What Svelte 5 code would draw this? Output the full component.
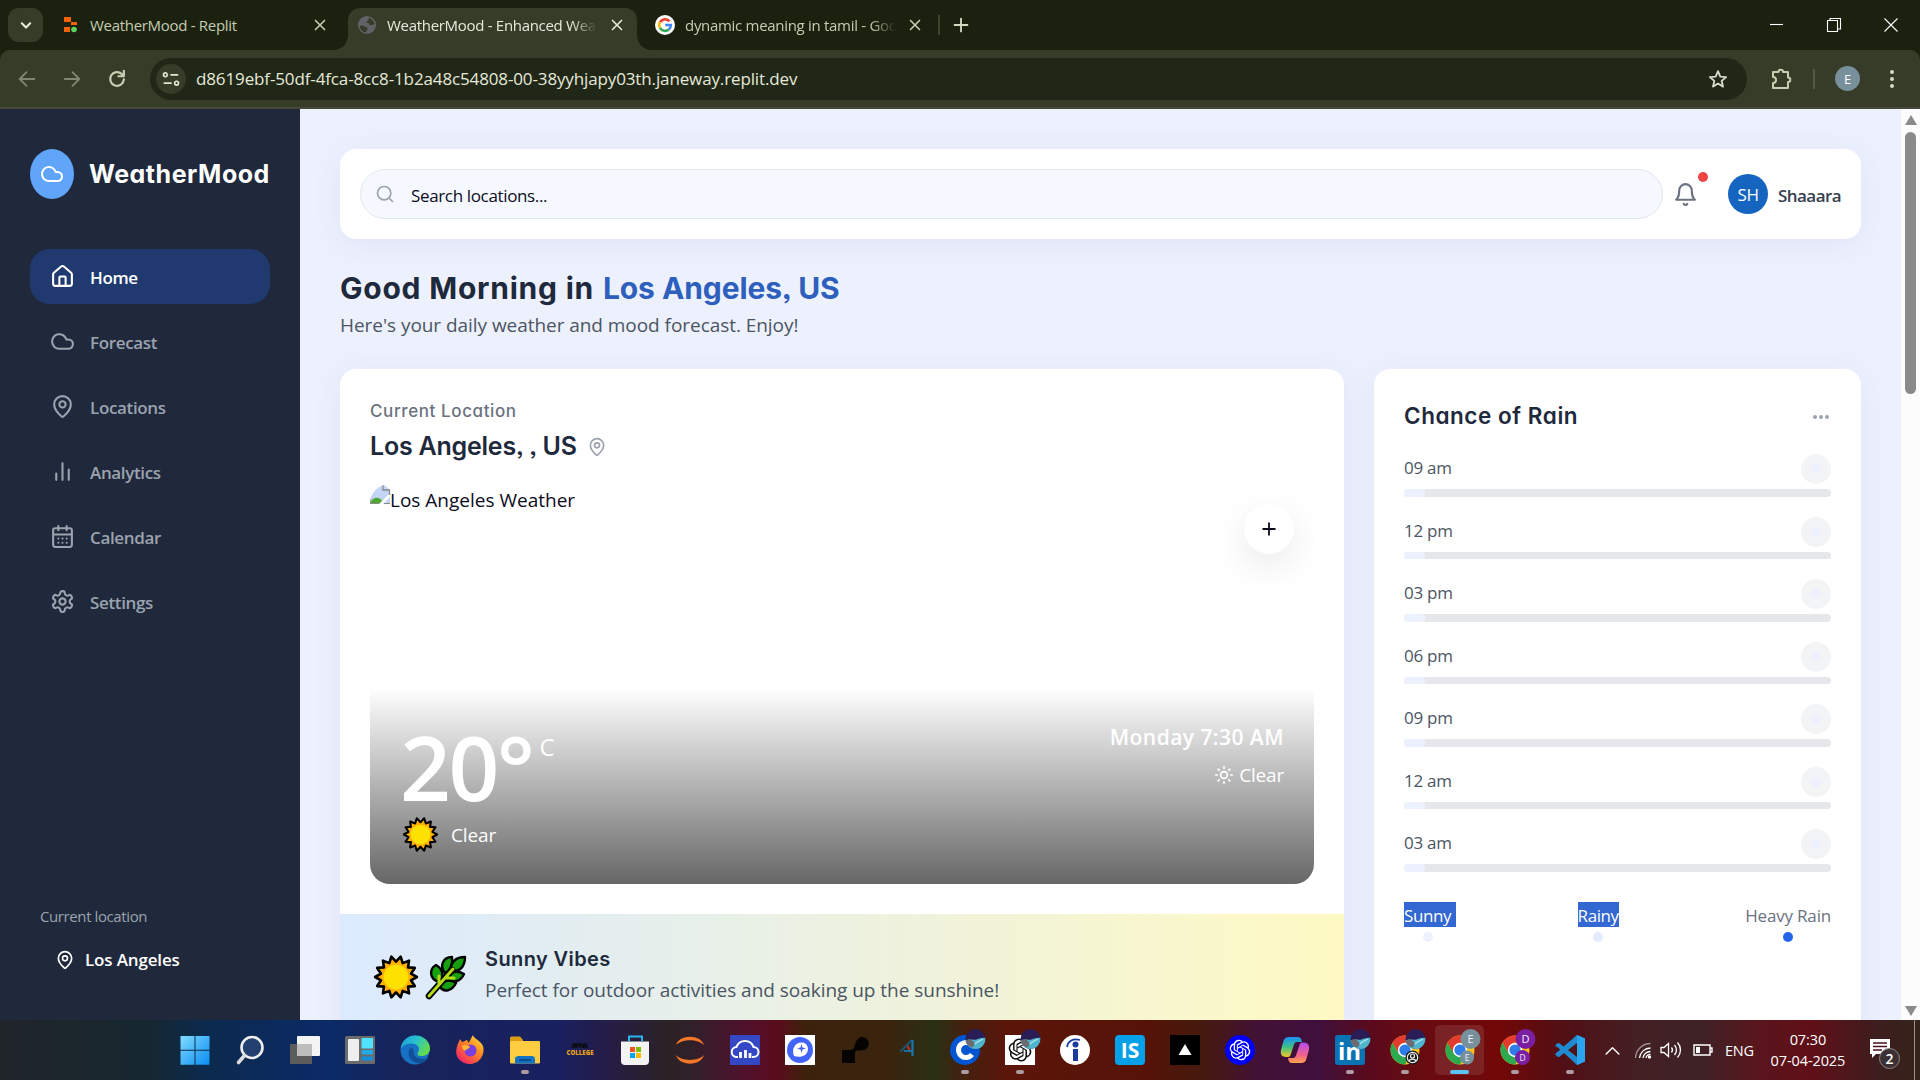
<script>
  const I = {
    cloud: 'M17.5 19H9a7 7 0 1 1 6.71-9h1.79a4.5 4.5 0 1 1 0 9Z',
    home: 'M15 21v-8a1 1 0 0 0-1-1h-4a1 1 0 0 0-1 1v8M3 10a2 2 0 0 1 .709-1.528l7-5.999a2 2 0 0 1 2.582 0l7 5.999A2 2 0 0 1 21 10v9a2 2 0 0 1-2 2H5a2 2 0 0 1-2-2z',
    pin: 'M20 10c0 4.993-5.539 10.193-7.399 11.799a1 1 0 0 1-1.202 0C9.539 20.193 4 14.993 4 10a8 8 0 0 1 16 0M9 10a3 3 0 1 0 6 0a3 3 0 1 0-6 0',
    chart: 'M18 20V10M12 20V4M6 20v-6',
    calendar: 'M8 2v4M16 2v4M5 4h14a2 2 0 0 1 2 2v14a2 2 0 0 1-2 2H5a2 2 0 0 1-2-2V6a2 2 0 0 1 2-2M3 10h18M8 14h.01M12 14h.01M16 14h.01M8 18h.01M12 18h.01M16 18h.01',
    gear: 'M12.22 2h-.44a2 2 0 0 0-2 2v.18a2 2 0 0 1-1 1.73l-.43.25a2 2 0 0 1-2 0l-.15-.08a2 2 0 0 0-2.73.73l-.22.38a2 2 0 0 0 .73 2.73l.15.1a2 2 0 0 1 1 1.72v.51a2 2 0 0 1-1 1.74l-.15.09a2 2 0 0 0-.73 2.73l.22.38a2 2 0 0 0 2.73.73l.15-.08a2 2 0 0 1 2 0l.43.25a2 2 0 0 1 1 1.73V20a2 2 0 0 0 2 2h.44a2 2 0 0 0 2-2v-.18a2 2 0 0 1 1-1.73l.43-.25a2 2 0 0 1 2 0l.15.08a2 2 0 0 0 2.73-.73l.22-.39a2 2 0 0 0-.73-2.73l-.15-.08a2 2 0 0 1-1-1.74v-.5a2 2 0 0 1 1-1.74l.15-.09a2 2 0 0 0 .73-2.73l-.22-.38a2 2 0 0 0-2.73-.73l-.15.08a2 2 0 0 1-2 0l-.43-.25a2 2 0 0 1-1-1.73V4a2 2 0 0 0-2-2zM9 12a3 3 0 1 0 6 0a3 3 0 1 0-6 0',
    search: 'M3 11a8 8 0 1 0 16 0a8 8 0 1 0-16 0M21 21l-4.3-4.3',
    bell: 'M6 8a6 6 0 0 1 12 0c0 7 3 9 3 9H3s3-2 3-9M10.3 21a1.94 1.94 0 0 0 3.4 0',
    sun: 'M8 12a4 4 0 1 0 8 0a4 4 0 1 0-8 0M12 2v2M12 20v2M4.93 4.93l1.41 1.41M17.66 17.66l1.41 1.41M2 12h2M20 12h2M6.34 17.66l-1.41 1.41M19.07 4.93l-1.41 1.41',
    plus: 'M5 12h14M12 5v14',
    close: 'M6 6l12 12M18 6L6 18',
    back: 'M20 12H4.500M11.500 4.500L4 12l7.500 7.500',
    forward: 'M4 12h15.500M12.500 4.500L20 12l-7.500 7.500',
    reload: 'M19.500 12.500a7.500 7.500 0 1 1-2.300-6L19.500 9M19.500 3v6h-6',
    star: 'M12 3.500l2.500 5.900 6.400.5-4.900 4.200 1.500 6.200-5.500-3.300-5.500 3.300 1.500-6.200-4.900-4.200 6.400-.5z',
    chevronDown: 'M7 10l5 5 5-5',
    chevronUp: 'M3 17l9-9 9 9',
    puzzle: 'M4 5h5.500a2.300 2.300 0 0 1 4.600 0H19v5.500a2.300 2.300 0 0 1 0 4.600V21H4v-5a3 3 0 0 0 0-6z',
    tune: 'M3 7a2.300 2.300 0 1 0 4.600 0a2.300 2.300 0 1 0-4.600 0M12 7h8M4 17h8M16.400 17a2.300 2.300 0 1 0 4.600 0a2.300 2.300 0 1 0-4.600 0'
  };

  const nav = [
    { label: 'Home', icon: 'home', active: true },
    { label: 'Forecast', icon: 'cloud' },
    { label: 'Locations', icon: 'pin' },
    { label: 'Analytics', icon: 'chart' },
    { label: 'Calendar', icon: 'calendar' },
    { label: 'Settings', icon: 'gear' }
  ];

  const hours = ['09 am', '12 pm', '03 pm', '06 pm', '09 pm', '12 am', '03 am'].map((time) => ({ time, chance: 5 }));

  // Fourteen-spike outline for the sun emoji.
  const spikes = Array.from({ length: 28 }, (_, i) => {
    const r = i % 2 ? 15.2 : 11.2;
    const a = (i * Math.PI) / 14;
    return `${(16 + r * Math.sin(a)).toFixed(2)},${(16 - r * Math.cos(a)).toFixed(2)}`;
  }).join(' ');

  const apps = [
    'windows', 'find', 'taskview', 'widgets', 'edge', 'firefox', 'files', 'apna', 'store', 'jupyter', 'cloudwatch',
    'drop', 'blob', 'four', 'coursera', 'gpt', 'info', 'is', 'vercel', 'gptblue', 'copilot',
    'linkedin', 'chromeA', 'chromeE', 'chromeD', 'vscode'
  ];
  const running = ['files', 'coursera', 'gpt', 'linkedin', 'chromeA', 'chromeD', 'vscode'];
</script>

{#snippet icon(name, size, weight = 2)}
  <svg width={size} height={size} viewBox="0 0 24 24" fill="none" stroke="currentColor" stroke-width={weight} stroke-linecap="round" stroke-linejoin="round"><path d={I[name]} /></svg>
{/snippet}

{#snippet sunEmoji(size)}
  <svg width={size} height={size} viewBox="0 0 32 32">
    <polygon points={spikes} fill="#ffb000" stroke="#000" stroke-width="1.9" stroke-linejoin="round" />
    <circle cx="16" cy="16" r="9" fill="#ffe100" />
  </svg>
{/snippet}

{#snippet knot(scale)}
  <path transform="translate(15 15) scale({scale}) translate(-12 -12)" fill="currentColor" d="M22.2819 9.8211a5.9847 5.9847 0 0 0-.5157-4.9108 6.0462 6.0462 0 0 0-6.5098-2.9A6.0651 6.0651 0 0 0 4.9807 4.1818a5.9847 5.9847 0 0 0-3.9977 2.9 6.0462 6.0462 0 0 0 .7427 7.0966 5.98 5.98 0 0 0 .511 4.9107 6.051 6.051 0 0 0 6.5146 2.9001A5.9847 5.9847 0 0 0 13.2599 24a6.0557 6.0557 0 0 0 5.7718-4.2058 5.9894 5.9894 0 0 0 3.9977-2.9001 6.0557 6.0557 0 0 0-.7475-7.0729zm-9.022 12.6081a4.4755 4.4755 0 0 1-2.8764-1.0408l.1419-.0804 4.7783-2.7582a.7948.7948 0 0 0 .3927-.6813v-6.7369l2.02 1.1686a.071.071 0 0 1 .038.052v5.5826a4.504 4.504 0 0 1-4.4945 4.4944zm-9.6607-4.1254a4.4708 4.4708 0 0 1-.5346-3.0137l.142.0852 4.783 2.7582a.7712.7712 0 0 0 .7806 0l5.8428-3.3685v2.3324a.0804.0804 0 0 1-.0332.0615L9.74 19.9502a4.4992 4.4992 0 0 1-6.1408-1.6464zM2.3408 7.8956a4.485 4.485 0 0 1 2.3655-1.9728V11.6a.7664.7664 0 0 0 .3879.6765l5.8144 3.3543-2.0201 1.1685a.0757.0757 0 0 1-.071 0l-4.8303-2.7865A4.504 4.504 0 0 1 2.3408 7.872zm16.5963 3.8558L13.1038 8.364 15.1192 7.2a.0757.0757 0 0 1 .071 0l4.8303 2.7913a4.4944 4.4944 0 0 1-.6765 8.1042v-5.6772a.79.79 0 0 0-.407-.667zm2.0107-3.0231l-.142-.0852-4.7735-2.7818a.7759.7759 0 0 0-.7854 0L9.409 9.2297V6.8974a.0662.0662 0 0 1 .0284-.0615l4.8303-2.7866a4.4992 4.4992 0 0 1 6.6802 4.66zM8.3065 12.863l-2.02-1.1638a.0804.0804 0 0 1-.038-.0567V6.0742a4.4992 4.4992 0 0 1 7.3757-3.4537l-.142.0805L8.704 5.459a.7948.7948 0 0 0-.3927.6813zm1.0976-2.3654l2.602-1.4998 2.6069 1.4998v2.9994l-2.5974 1.4997-2.6067-1.4997Z" />
{/snippet}

{#snippet chrome()}
  <circle cx="15" cy="15" r="14.500" fill="#fbc116" />
  <path d="M2.400 7.800A14.500 14.500 0 0 1 27.600 7.800H15L8.700 18.700z" fill="#e33b2e" />
  <path d="M2.400 7.800A14.500 14.500 0 0 0 15 29.500L21.300 18.600H8.700z" fill="#2da94f" />
  <circle cx="15" cy="15" r="7.200" fill="#fff" />
  <circle cx="15" cy="15" r="5.600" fill="#2f7de9" />
{/snippet}

{#snippet globe()}
  <circle cx="25.500" cy="4" r="10" fill="#2a1d55" />
  <path d="M15.600 5.500c4-2 7 0 11-1 3-1 6-2 8.800-1.500a10 10 0 0 1-9.400 11c-5 .3-9.500-3.200-10.400-8.500z" fill="#4fb4cc" />
  <path d="M15.600 5.500l5-1.500 4 4-1.500 4.500c-4-.5-7-3.500-7.500-7z" fill="#6d6a70" />
  <path d="M25 9c2-3 5-3 8-5" fill="none" stroke="#a5e4ee" stroke-width="1.500" />
{/snippet}

{#snippet app(name)}
  <svg class="app" width="30" height="30" viewBox="0 0 30 30">
    {#if name === 'windows'}
      <defs><linearGradient id="win" x1="0" y1="0" x2="1" y2="1"><stop offset="0" stop-color="#7fdcff" /><stop offset="1" stop-color="#0a8bf2" /></linearGradient></defs>
      <path d="M.5 1h14v13.700H.5zM15.500 1h14v13.700h-14zM.5 15.800h14v14H.5zM15.500 15.800h14v14h-14z" fill="url(#win)" />
    {:else if name === 'find'}
      <circle cx="17" cy="12.500" r="10.500" fill="#24406f" stroke="#eee" stroke-width="2.600" />
      <path d="M9.500 20.500L3.500 27.500" stroke="#ddd" stroke-width="3.600" stroke-linecap="round" />
    {:else if name === 'taskview'}
      <rect x="0" y="9" width="22" height="20" rx="1" fill="#5c5c5c" /><rect x="7" y="1" width="23" height="20" rx="1" fill="#f4f4f4" /><rect x="7" y="9" width="15" height="12" fill="#bdbdbd" />
    {:else if name === 'widgets'}
      <rect y="1" width="30" height="28" rx="1.500" fill="#6b6b6b" /><rect x="3" y="4" width="11" height="22" rx="1" fill="#eee" /><rect x="16.500" y="3" width="11.500" height="10.500" rx="1" fill="#4fe3ff" /><rect x="16.500" y="15" width="11.500" height="4.500" rx="1" fill="#22a9e8" /><rect x="16.500" y="21.500" width="11.500" height="4" rx="1" fill="#1590dd" />
    {:else if name === 'edge'}
      <defs><linearGradient id="edge" x1="0" y1="0" x2="1" y2=".5"><stop offset="0" stop-color="#1c9ae0" /><stop offset=".55" stop-color="#29c3c9" /><stop offset="1" stop-color="#62dc4c" /></linearGradient></defs>
      <circle cx="15" cy="15" r="14.500" fill="#1672c4" />
      <path d="M.6 14C2 5 8 .5 15.500.5 24 .5 30 7 30 13.500c0 5-4 7.500-8.500 7.500-3.500 0-5-1.800-3.500-3.800 3-4.200-.6-8.700-6.500-8.700C6.500 8.500 2.500 10.500.6 14z" fill="url(#edge)" />
      <path d="M11 12c-5 5-2.500 15.500 8.500 16.500 4 0 7-3 9-6-5 2.500-16 2-15-8z" fill="#124f96" />
    {:else if name === 'firefox'}
      <defs><linearGradient id="fox" x1="1" y1="0" x2=".2" y2="1"><stop offset="0" stop-color="#fff04a" /><stop offset=".45" stop-color="#ff8a1f" /><stop offset="1" stop-color="#f5206b" /></linearGradient></defs>
      <path d="M18 0c1 4 7 5 10 11 2.500 9-4 18-13 18S-.5 22 1.500 14c.5-4 2-6 3.500-10 1 2 2 3 3 3 2-1 3-2 4-2 1 1 1 2 1.500 3C15 6 16 3 18 0z" fill="url(#fox)" />
      <circle cx="15.500" cy="15.500" r="6" fill="#7a3fe0" /><path d="M7 11c3-2 7-1 8 1-1 2-4 2-5 4-1-1-3-2-3-5z" fill="#ffb52e" />
    {:else if name === 'files'}
      <path d="M0 3.500C0 2 1 1.500 2 1.500h8l3 3.500v5H0z" fill="#dd9b10" /><rect y="6" width="30" height="22.500" rx="1.200" fill="#fdcc40" /><path d="M5 28.500v-4a3.500 3.500 0 0 1 3.500-3.500h13a3.500 3.500 0 0 1 3.500 3.500v4z" fill="#1372c2" /><rect x="9" y="24" width="12" height="2" rx="1" fill="#0b4c8d" />
    {:else if name === 'apna'}
      <text x="15" y="13" text-anchor="middle" font-size="7.500" font-weight="800" fill="#0b0b12" textLength="17">APNA</text><text x="15" y="19.500" text-anchor="middle" font-size="7.500" font-weight="800" fill="#e8a21c" textLength="27" lengthAdjust="spacingAndGlyphs">COLLEGE</text>
    {:else if name === 'store'}
      <path d="M9 6V1.500h13V6" fill="none" stroke="#29b6ee" stroke-width="2" /><path d="M1 6.500h28V26a4 4 0 0 1-4 4H5a4 4 0 0 1-4-4z" fill="#f3f3f3" /><path d="M10 12h5v5h-5z" fill="#f25022" /><path d="M16 12h5v5h-5z" fill="#7fba00" /><path d="M10 18h5v5h-5z" fill="#00a4ef" /><path d="M16 18h5v5h-5z" fill="#ffb900" />
    {:else if name === 'jupyter'}
      <path d="M1 10C4-1 26-1 29 10 23 3.500 7 3.500 1 10zM1 20c3 11.500 25 11.500 28 0-6 6.500-22 6.500-28 0z" fill="#f37726" />
    {:else if name === 'cloudwatch'}
      <rect width="30" height="30" fill="#3448c5" /><path d="M8 22H7a5 5 0 0 1-.500-10A9 9 0 0 1 23.500 12a5 5 0 0 1 0 10H22" fill="none" stroke="#fff" stroke-width="2" /><path d="M10.500 17v6M15.500 15v8M20 18v5" stroke="#fff" stroke-width="2.800" />
    {:else if name === 'drop'}
      <rect width="30" height="30" fill="#fff" /><circle cx="15" cy="15" r="13" fill="#4264fb" /><path d="M9 21c-3-8 2-14 8-13.500 5 .5 7 5 5.500 9C21 21 15 23 9 21z" fill="#fff" /><path d="M16.500 9l1 3.500 3.500 1-3.500 1-1 3.500-1-3.500-3.500-1 3.500-1z" fill="#4264fb" />
    {:else if name === 'blob'}
      <path d="M2 15h8c5 0 4-4 6-8a6.500 6.500 0 1 1 7 8c-4 2-8-2-8 4v9H2z" fill="#060402" />
    {:else if name === 'four'}
      <path d="M5.500 16.500L17 5" fill="none" stroke="#1d5578" stroke-width="2" /><path d="M17.500 5v16" stroke="#1478b2" stroke-width="2.200" /><path d="M12.500 11l3 6" stroke="#c03038" stroke-width="2" /><path d="M9 16h8" stroke="#1478b2" stroke-width="1.800" />
    {:else if name === 'coursera'}
      <circle cx="15" cy="15" r="15" fill="#0056d2" /><path d="M22 19.500a7.500 7.500 0 1 1 0-9" fill="none" stroke="#fff" stroke-width="5" />{@render globe()}
    {:else if name === 'gpt'}
      <rect width="30" height="30" fill="#fff" /><g color="#111">{@render knot(0.95)}</g>{@render globe()}
    {:else if name === 'info'}
      <circle cx="15" cy="15" r="15" fill="#fff" /><circle cx="15.500" cy="9.500" r="3" fill="#1b3c9c" /><path d="M13 14h5v12h-5z" fill="#1b3c9c" /><path d="M7 12c1-6 6-9 13-7" fill="none" stroke="#1b3c9c" stroke-width="1.800" />
    {:else if name === 'is'}
      <rect width="30" height="30" rx="4" fill="#06a0e8" /><text x="15" y="22.500" text-anchor="middle" font-size="21" font-weight="700" fill="#fff">IS</text>
    {:else if name === 'vercel'}
      <rect width="30" height="30" fill="#000" /><path d="M15 9l6.500 11h-13z" fill="#fff" />
    {:else if name === 'gptblue'}
      <circle cx="15" cy="15" r="15" fill="#0000fa" /><g color="#fff">{@render knot(0.86)}</g>
    {:else if name === 'copilot'}
      <defs><linearGradient id="cpa" x1="0" y1="0" x2="0" y2="1"><stop offset="0" stop-color="#1a8ef5" /><stop offset=".5" stop-color="#3cc184" /><stop offset="1" stop-color="#f5c82a" /></linearGradient><linearGradient id="cpb" x1="0" y1="0" x2="0" y2="1"><stop offset="0" stop-color="#b44df0" /><stop offset=".6" stop-color="#f2608e" /><stop offset="1" stop-color="#ffa54a" /></linearGradient></defs>
      <path d="M9 2h9c3 0 3.500 3 4 5h-5c-2 0-3 2-3.500 4l-3 9c-.5 2-2 2-4 2-6 0-6.500-4-5-9l2-7c.8-2.500 2.500-4 5.500-4z" fill="url(#cpa)" />
      <path d="M21 28h-9c-2.500 0-3.500-2-4-5h5c2 0 3-2 3.500-4l3-9c.5-2 2-2.500 4-2.500 5.500 0 6.500 4 5 9l-2 7c-.8 3-2.500 4.500-5.500 4.500z" fill="url(#cpb)" />
    {:else if name === 'linkedin'}
      <rect width="30" height="30" rx="3" fill="#0a73b4" /><text x="14.500" y="25" text-anchor="middle" font-size="24" font-weight="700" fill="#fff">in</text>{@render globe()}
    {:else if name === 'chromeA'}
      {@render chrome()}{@render globe()}<circle cx="22.500" cy="22.500" r="7" fill="#181818" /><circle cx="22.500" cy="22.500" r="5.200" fill="none" stroke="#eee" stroke-width="1.200" /><circle cx="22.500" cy="21" r="2" fill="none" stroke="#eee" stroke-width="1.200" /><path d="M19 26c1-2.500 6-2.500 7 0" fill="none" stroke="#eee" stroke-width="1.200" />
    {:else if name === 'chromeE'}
      {@render chrome()}<circle cx="25.500" cy="4" r="10" fill="#78909c" /><text x="25.500" y="8" text-anchor="middle" font-size="11" fill="#eef">E</text><circle cx="22" cy="22.500" r="7" fill="#78909c" /><text x="22" y="25.500" text-anchor="middle" font-size="8.500" fill="#eef">E</text>
    {:else if name === 'chromeD'}
      {@render chrome()}<circle cx="25.500" cy="4" r="10" fill="#7b1fa2" /><text x="25.500" y="8" text-anchor="middle" font-size="11" fill="#eef">D</text><circle cx="22.500" cy="22.500" r="7.500" fill="#7b1fa2" /><text x="22.500" y="25.500" text-anchor="middle" font-size="8.500" fill="#eef">D</text>
    {:else if name === 'vscode'}
      <path d="M22 0l8 3.500v23L22 30 3 12.500 0 11l2-2.500 2-.500L22 22V8L4 22l-2-.500-2-2.500L22 0z" fill="#1f8ad2" /><path d="M22 0l8 3.500v23L22 30z" fill="#2aa4ee" />
    {/if}
  </svg>
{/snippet}

<div class="screen">
  <div class="tabs">
    <div class="menu">{@render icon('chevronDown', 20, 2.6)}</div>
    <div class="tab first">
      <svg width="14" height="18" viewBox="0 0 14 18"><path d="M0 1h7v5H0zM7 6h6v3H7zM0 11h6v5H0z" fill="#f26207" /><circle cx="10" cy="13.500" r="2.800" fill="#5fd35f" /></svg>
      <span class="ttl">WeatherMood - Replit</span>
      <span class="x">{@render icon('close', 18, 2.2)}</span>
    </div>
    <div class="tab active">
      <svg width="18" height="18" viewBox="0 0 18 18"><circle cx="9" cy="9" r="9" fill="#5f6368" /><path d="M1.500 9.500l4 .3c1 .2 1.200 1 2.200 1.200l2 .8c.3 1.500-1.200 2.200-1.500 4.700C4.500 16.200 1.800 13.200 1.500 9.500zM10.500 1.700c3 .6 5.300 3 5.900 6.300l-2.400 1.200-2.500-.4-.8-1.600-2.200-.6.2-1.600 1.800-.6z" fill="#363c28" /></svg>
      <span class="ttl fade">WeatherMood - Enhanced Weather</span>
      <span class="x">{@render icon('close', 18, 2.2)}</span>
    </div>
    <div class="tab third">
      <svg width="20" height="20" viewBox="0 0 20 20"><circle cx="10" cy="10" r="10" fill="#fff" /><g fill="none" stroke-width="2.600"><path d="M14.500 6.300A5.900 5.900 0 0 0 5 7.200" stroke="#ea4335" /><path d="M5 7.200a5.900 5.900 0 0 0 0 5.700" stroke="#fbbc05" /><path d="M5 12.900a5.900 5.900 0 0 0 8.800 1.600" stroke="#34a853" /><path d="M13.800 14.500a5.900 5.900 0 0 0 2-4.500H10.200" stroke="#4285f4" /></g></svg>
      <span class="ttl fade">dynamic meaning in tamil - Google</span>
      <span class="x">{@render icon('close', 18, 2.2)}</span>
    </div>
    <i class="tabsep"></i>
    <span class="newtab">{@render icon('plus', 22, 2)}</span>
    <div class="winctl">
      <svg width="14" height="14" viewBox="0 0 14 14"><path d="M0 6.500h13" /></svg>
      <svg width="14" height="14" viewBox="0 0 14 14"><path d="M.5 2.500h10v11H.5zM3 2.500v-2h10.500v10.500h-3" /></svg>
      <svg width="14" height="14" viewBox="0 0 14 14"><path d="M.5.5l13 13M13.500.5l-13 13" /></svg>
    </div>
  </div>

  <div class="toolbar">
    <span class="tb dim">{@render icon('back', 22, 2)}</span>
    <span class="tb dim">{@render icon('forward', 22, 2)}</span>
    <span class="tb">{@render icon('reload', 22, 2.4)}</span>
    <div class="url">
      <span class="site">{@render icon('tune', 20, 2)}</span>
      <span class="addr">d8619ebf-50df-4fca-8cc8-1b2a48c54808-00-38yyhjapy03th.janeway.replit.dev</span>
      <span class="bookmark">{@render icon('star', 22, 2)}</span>
    </div>
    <span class="ext">{@render icon('puzzle', 24, 2)}</span>
    <i class="toolsep"></i>
    <span class="profile">E</span>
    <span class="dots"><i></i><i></i><i></i></span>
  </div>

  <div class="page">
    <aside>
      <div class="brand"><span class="logo">{@render icon('cloud', 24, 2)}</span><span class="name">WeatherMood</span></div>
      <nav>
        {#each nav as item}
          <div class="item" class:on={item.active}>{@render icon(item.icon, 25)}<span>{item.label}</span></div>
        {/each}
      </nav>
      <div class="here">
        <div class="cap">Current location</div>
        <div class="city">{@render icon('pin', 20)}<span>Los Angeles</span></div>
      </div>
    </aside>

    <main>
      <header>
        <div class="search">{@render icon('search', 20)}<span>Search locations...</span></div>
        <div class="bell">{@render icon('bell', 25)}<i></i></div>
        <div class="avatar">SH</div>
        <div class="user">Shaaara</div>
      </header>

      <h1>Good Morning in <b>Los Angeles, US</b></h1>
      <p class="sub">Here's your daily weather and mood forecast. Enjoy!</p>

      <div class="grid">
        <section class="card weather">
          <div class="cl">Current Location</div>
          <div class="place"><span>Los Angeles, , US</span>{@render icon('pin', 20)}</div>
          <div class="photo">
            <div class="alt">
              <svg width="20" height="20" viewBox="0 0 20 20"><path d="M0 0h13l7 6v14H0z" fill="#c3d5f6" /><path d="M0 20c2-8 10-8 13-2v2z" fill="#4ea832" /><path d="M9 20L20 9v4l-7 7z" fill="#fff" /><path d="M13 0v6h7M.5 8v12M19.500 6v5" fill="none" stroke="#8a8a8a" stroke-width="1.300" /><path d="M0 19.500h9M14 19.500h6" stroke="#8a8a8a" /></svg>
              <span>Los Angeles Weather</span>
            </div>
            <div class="add">{@render icon('plus', 20, 2.2)}</div>
            <div class="over">
              <div class="left">
                <div class="temp"><span class="deg">20°</span><span class="c">C</span></div>
                <div class="cond">{@render sunEmoji(35)}<span>Clear</span></div>
              </div>
              <div class="right">
                <div class="when">Monday 7:30 AM</div>
                <div class="cond2">{@render icon('sun', 20)}<span>Clear</span></div>
              </div>
            </div>
          </div>
          <div class="mood">
            {@render sunEmoji(44)}
            <svg class="leaf" width="42" height="44" viewBox="0 0 42 44">
              <g fill="#16a010" stroke="#000" stroke-width="2.400" stroke-linejoin="round">
                <path d="M14 27C4 24 4 14 11 10c7 4 8 11 5 17z" /><path d="M20 18c-6-7-2-16 7-16 1 7-1 13-7 16z" /><path d="M25 16c1-9 6-14 15-14 0 9-5 16-15 14z" /><path d="M22 24c3-8 10-9 17-5-3 7-10 10-17 5z" /><path d="M15 32c3-7 9-8 16-4-4 8-12 10-16 4z" />
              </g>
              <path d="M4 41L27 15" stroke="#000" stroke-width="6.500" stroke-linecap="round" /><path d="M4 41L28 14M14 29v-8M21 23h8" stroke="#b5dc14" stroke-width="3" stroke-linecap="round" />
            </svg>
            <div class="words"><div class="mt">Sunny Vibes</div><div class="md">Perfect for outdoor activities and soaking up the sunshine!</div></div>
          </div>
        </section>

        <section class="card rain">
          <div class="rh"><span>Chance of Rain</span><em><i></i><i></i><i></i></em></div>
          {#each hours as h}
            <div class="hour">
              <div class="row"><span>{h.time}</span><div class="ring"><i></i></div></div>
              <div class="bar"><i style="width:{h.chance}%"></i></div>
            </div>
          {/each}
          <div class="legend">
            <div class="lg"><span class="sel wide">Sunny</span><i class="s"></i></div>
            <div class="lg"><span class="sel">Rainy</span><i class="r"></i></div>
            <div class="lg heavy"><span>Heavy Rain</span><i class="h"></i></div>
          </div>
        </section>
      </div>
    </main>

    <div class="scroll"><b class="up"></b><div class="thumb"></div><b class="down"></b></div>
  </div>

  <div class="taskbar">
    <div class="apps">
      {#each apps as a}
        <div class="cell" class:run={running.includes(a)} class:cur={a === 'chromeE'}>{@render app(a)}</div>
      {/each}
    </div>
    <div class="tray">
      <span class="t1">{@render icon('chevronUp', 17, 2)}</span>
      <svg class="t2" width="18" height="18" viewBox="0 0 18 18" fill="none" stroke="#fff" stroke-width="1.300"><path d="M5.500 17A11 11 0 0 1 16.500 7M9 17a7.500 7.500 0 0 1 7.500-6.500M12 17a4 4 0 0 1 4.500-3.500" /><path d="M1.500 17A15 15 0 0 1 16.500 2.500" opacity=".5" /><circle cx="15.500" cy="16" r="1" fill="#fff" /></svg>
      <svg class="t3" width="22" height="18" viewBox="0 0 22 18" fill="none" stroke="#fff" stroke-width="1.300"><path d="M1 6.500h3L8.500 2.500v13L4 11.500H1zM11.500 6.500a4 4 0 0 1 0 5M14.500 4a7.500 7.500 0 0 1 0 10M17.500 1.500a11 11 0 0 1 0 15" /></svg>
      <svg class="t4" width="20" height="12" viewBox="0 0 20 12"><path d="M1 1h16v10H1zM17 4h2v4h-2" fill="none" stroke="#fff" stroke-width="1.400" /><path d="M3 3h4v6H3z" fill="#fff" /></svg>
      <span class="eng">ENG</span>
      <div class="clock"><span>07:30</span><span>07-04-2025</span></div>
      <svg class="note" width="32" height="32" viewBox="0 0 32 32"><path d="M1 1h20v15H7l-4 4v-4H1z" fill="#fff" /><path d="M4 5h14M4 8.500h14M4 12h9" stroke="#4a1218" stroke-width="1.300" /><circle cx="20.500" cy="20.500" r="10" fill="#3b3134" stroke="#8d8587" /><text x="20.500" y="25.500" text-anchor="middle" font-size="14" font-weight="600" fill="#fff">2</text></svg>
      <i class="edge"></i>
    </div>
  </div>
</div>

<style>
  :global(body) { margin: 0; overflow: hidden; }
  .screen { width: 1920px; height: 1080px; display: flex; flex-direction: column; overflow: hidden; background: #1b210f; font-family: "Open Sans", "Noto Sans", sans-serif; color: #0b0b1e; }
  .screen * { box-sizing: border-box; }
  svg { display: block; flex: none; overflow: visible; }
  span, div, h1, p { white-space: nowrap; }

  .tabs { height: 50px; flex: none; display: flex; align-items: flex-start; background: #1b210f; padding: 8px 22px 0 8px; color: #c5cbb0; }
  .menu { width: 35px; height: 34px; border-radius: 11px; background: #363c28; color: #e6eadb; display: grid; place-items: center; }
  .tab { height: 42px; display: flex; align-items: center; padding-bottom: 8px; font-size: 15px; }
  .ttl { flex: 1; overflow: hidden; line-height: 22px; letter-spacing: -.3px; }
  .fade { -webkit-mask-image: linear-gradient(90deg, #000 88%, transparent 100%); mask-image: linear-gradient(90deg, #000 88%, transparent 100%); }
  .x { width: 18px; flex: none; }
  .first { width: 305px; padding-left: 21px; gap: 12px; padding-right: 19px; }
  .active { width: 289px; padding-left: 10px; padding-right: 11px; gap: 11px; background: #363c28; border-radius: 12px 12px 0 0; color: #e6e9da; position: relative; }
  .active::before, .active::after { content: ""; position: absolute; bottom: 0; width: 14px; height: 14px; }
  .active::before { left: -14px; background: radial-gradient(circle at 0 0, transparent 13.5px, #363c28 14px); }
  .active::after { right: -14px; background: radial-gradient(circle at 100% 0, transparent 13.5px, #363c28 14px); }
  .third { width: 287px; padding-left: 18px; gap: 10px; }
  .tabsep { width: 2px; height: 20px; background: #3d4430; margin: 7px 0 0 14px; }
  .newtab { margin: 6px 0 0 10px; color: #d5dbc2; }
  .winctl { margin-left: auto; display: flex; gap: 43px; padding-top: 10px; }
  .winctl svg { fill: none; stroke: #fff; stroke-width: 1.1; }

  .toolbar { height: 59px; flex: none; background: #363c28; border-bottom: 2px solid #47473b; border-radius: 10px 10px 0 0; display: flex; align-items: center; padding-left: 16px; color: #c8ceb4; }
  .tb { width: 22px; margin-right: 23px; }
  .tb + .tb + .tb { margin-right: 22px; }
  .dim { opacity: .5; }
  .url { width: 1597px; height: 42px; border-radius: 21px; background: #212716; display: flex; align-items: center; padding-left: 6px; }
  .site { width: 30px; height: 30px; border-radius: 50%; background: #363c28; color: #e2e6d3; display: grid; place-items: center; margin-right: 10px; }
  .addr { flex: 1; font-size: 17px; letter-spacing: -.13px; line-height: 24px; padding-top: 1px; color: #e6e9da; }
  .bookmark { width: 22px; margin-right: 18px; color: #d5d8ca; }
  .ext { margin-left: 22px; }
  .toolsep { width: 2px; height: 20px; background: #525941; margin-left: 20px; }
  .profile { margin-left: 20px; width: 25px; height: 25px; border-radius: 50%; background: #78909c; color: #fff; font-size: 13px; display: grid; place-items: center; }
  .dots { margin-left: 30px; display: flex; flex-direction: column; gap: 3px; }
  .dots i { width: 4px; height: 4px; border-radius: 50%; background: #d5dbc2; }

  .page { height: 911px; flex: none; display: flex; background: #edf1fe; overflow: hidden; }
  aside { width: 300px; flex: none; background: #1f293b; padding: 40px 30px; display: flex; flex-direction: column; }
  .brand { display: flex; align-items: center; gap: 15px; height: 50px; }
  .logo { width: 44px; height: 50px; border-radius: 50%; background: #60a5fa; color: #fff; display: grid; place-items: center; padding-right: 1px; }
  .name, h1, .cl, .place, .mt, .rh { font-family: Inter, sans-serif; font-feature-settings: "cv11", "ss03"; }
  .name { font-size: 25px; font-weight: 700; color: #fff; line-height: 30px; letter-spacing: .5px; }
  nav { margin-top: 50px; display: flex; flex-direction: column; gap: 10px; }
  .item { height: 55px; border-radius: 20px; padding-left: 20px; display: flex; align-items: center; gap: 15px; color: #9ca3af; font-size: 17px; font-weight: 600; letter-spacing: -.35px; }
  .item span { padding-top: 2px; }
  .on { background: #203a70; color: #fff; }
  .here { margin-top: auto; padding: 0 0 8px 10px; }
  .cap { font-size: 15px; color: #9ca3af; line-height: 20px; letter-spacing: -.4px; }
  .city { display: flex; align-items: center; gap: 10px; padding-left: 15px; margin-top: 22px; color: #fff; font-size: 17px; font-weight: 600; line-height: 24px; letter-spacing: -.15px; }

  main { flex: 1; padding: 40px 40px 0; }
  header { height: 90px; width: 1521px; border-radius: 16px; background: #fff; box-shadow: 0 5px 30px rgba(60, 80, 150, .08); display: flex; align-items: center; padding: 0 20px; font-size: 17px; letter-spacing: -.35px; }
  .search { width: 1303px; flex: none; height: 50px; border: 1px solid #e2e6ee; border-radius: 25px; background: #f5f8ff; display: flex; align-items: center; padding-left: 14px; gap: 16px; color: #9ca3af; }
  .search span { color: #0b0b1e; padding-top: 2px; }
  .bell { position: relative; margin-left: 10px; color: #6b7280; }
  .bell i { position: absolute; width: 10px; height: 10px; border-radius: 50%; background: #ef4444; right: -10px; top: -10px; }
  .avatar { width: 40px; height: 40px; flex: none; border-radius: 50%; background: #1565c0; color: #fff; display: grid; place-items: center; margin-left: 30px; }
  .user { margin-left: 10px; color: #374151; font-weight: 600; letter-spacing: -.55px; padding-top: 2px; }
  h1 { margin: 29px 0 0; font-size: 30px; line-height: 40px; font-weight: 700; color: #1e293b; letter-spacing: .77px; }
  h1 b { color: #2f5fbd; font-weight: inherit; letter-spacing: -.07px; margin-left: 1px; }
  .sub { margin: 2px 0 0; font-size: 19px; line-height: 30px; color: #4b5563; letter-spacing: -.05px; }
  .grid { display: flex; gap: 30px; margin-top: 29px; }
  .card { height: 700px; background: #fff; border-radius: 16px; box-shadow: 0 5px 30px rgba(60, 80, 150, .08); }
  .weather { width: 1004px; padding-top: 30px; }
  .cl { padding-left: 30px; font-size: 17px; line-height: 25px; font-weight: 500; color: #6b7280; letter-spacing: .6px; }
  .place { padding-left: 30px; height: 35px; margin-top: 5px; display: flex; align-items: center; gap: 10px; color: #9ca3af; }
  .place span { font-size: 25px; font-weight: 600; color: #1e293b; letter-spacing: -.22px; padding-bottom: 1px; }
  .photo { position: relative; margin: 20px 30px 0; height: 400px; border-radius: 20px; overflow: hidden; display: flex; flex-direction: column; justify-content: space-between; }
  .alt { display: flex; font-size: 19px; line-height: 32px; color: #0b0b1e; }
  .add { position: absolute; right: 20px; top: 20px; width: 50px; height: 50px; border-radius: 50%; background: #fff; box-shadow: 0 12px 36px rgba(0, 0, 0, .09); display: grid; place-items: center; }
  .over { height: 196px; background: linear-gradient(180deg, rgba(0, 0, 0, 0), rgba(0, 0, 0, .6)); color: #fff; display: flex; justify-content: space-between; padding: 31px 30px 0 30px; }
  .temp { display: flex; align-items: flex-start; height: 98px; }
  .deg { font-size: 89px; font-weight: 600; line-height: 96px; letter-spacing: -2.500px; }
  .c { font-size: 24px; font-weight: 500; line-height: 30px; margin: 13px 0 0 7px; }
  .cond { display: flex; align-items: center; gap: 13px; padding-left: 3px; font-size: 19px; letter-spacing: -.15px; }
  .right { text-align: right; }
  .when { font-size: 21px; font-weight: 600; line-height: 28px; margin-top: 4px; letter-spacing: .45px; }
  .cond2 { display: flex; align-items: center; justify-content: flex-end; gap: 5px; font-size: 19px; line-height: 26px; margin-top: 10px; letter-spacing: -.2px; }
  .cond2 span { padding-top: 1px; }
  .mood { margin-top: 30px; height: 300px; background: linear-gradient(90deg, #dbeafe, #fef9c3); display: flex; padding: 41px 0 0 34px; }
  .leaf { margin-left: 7px; }
  .words { margin: -11px 0 0 18px; }
  .mt { font-size: 20px; line-height: 30px; font-weight: 600; color: #1e293b; letter-spacing: .4px; }
  .md { font-size: 19px; line-height: 30px; color: #4b5563; margin-top: 1px; letter-spacing: -.03px; }

  .rain { width: 487px; padding: 30px 30px 0; }
  .rh { height: 35px; display: flex; align-items: center; justify-content: space-between; font-size: 22.5px; font-weight: 600; color: #1e293b; margin-bottom: 20px; letter-spacing: .55px; }
  .rh span { padding-bottom: 2px; }
  .rh em { display: flex; gap: 2px; padding-right: 2px; }
  .rh em i { width: 4px; height: 4px; border-radius: 50%; background: #9ca3af; }
  .hour { height: 62.5px; }
  .row { display: flex; justify-content: space-between; height: 30px; font-size: 17px; line-height: 28px; color: #4b5563; letter-spacing: -.25px; }
  .ring { width: 30px; height: 30px; border-radius: 50%; background: #f3f4f6; display: grid; place-items: center; }
  .ring i { width: 10px; height: 10px; border-radius: 50%; background: #edf1fe; }
  .bar { margin-top: 5px; height: 7.5px; border-radius: 4px; background: #e5e7eb; overflow: hidden; }
  .bar i { display: block; height: 100%; border-radius: 4px; background: #edf1fe; }
  .legend { display: flex; justify-content: space-between; margin-top: 10px; font-size: 17px; line-height: 25px; color: #6b7280; letter-spacing: -.4px; }
  .heavy { letter-spacing: -.18px; }
  .lg { display: flex; flex-direction: column; align-items: center; gap: 5px; }
  .lg span { height: 25px; line-height: 27px; }
  .lg i { width: 10px; height: 10px; border-radius: 50%; }
  .sel { background: #3367d1; color: #fff; }
  .wide { padding-right: 5px; margin-right: -5px; }
  .s { background: #edf1fe; }
  .r { background: #e3ebfe; }
  .h { background: #2563eb; }

  .scroll { width: 19px; flex: none; background: #fcfcfc; display: flex; flex-direction: column; align-items: center; padding: 6px 0 4px; }
  .up, .down { border: 6px solid transparent; width: 0; height: 0; }
  .up { border-top: 0; border-bottom: 10px solid #8a8a8a; }
  .down { border-bottom: 0; border-top: 10px solid #8a8a8a; margin-top: auto; }
  .thumb { width: 11px; height: 262px; border-radius: 6px; background: #8a8a8a; margin-top: 7px; }

  .taskbar { height: 60px; flex: none; display: flex; padding-left: 167px; color: #fff; background: linear-gradient(90deg, #20252a 0, #162730 150px, #0c2a4c 200px, #0b2a68 330px, #17245a 400px, #192060 560px, #251d45 610px, #2c2224 670px, #30202a 690px, #50102c 745px, #5a0d1a 780px, #3c220d 805px, #3a240e 890px, #2a3014 935px, #45200f 965px, #5c1509 1010px, #551308 1150px, #451a0d 1200px, #421137 1260px, #40103c 1320px, #5a0a1c 1370px, #660c12 1410px, #720808 1500px, #520f14 1560px, #432024 1640px, #3e2226 1700px, #5a151c 1760px, #600f18 1810px, #3c1e1e 1880px, #352319 1920px); }
  .apps { display: flex; width: 1430px; flex: none; }
  .cell { width: 55px; height: 60px; display: flex; justify-content: center; padding-top: 15px; position: relative; }
  .app { position: relative; }
  .run::after, .cur::after { content: ""; position: absolute; left: 24px; bottom: 6px; width: 8px; height: 4px; border-radius: 2px; background: #b09ba3; }
  .cur::after { left: 18px; width: 19px; background: #5cc3f5; }
  .cur::before { content: ""; position: absolute; left: 3px; top: 5px; width: 49px; height: 50px; border-radius: 5px; background: rgba(255, 255, 255, .1); }
  .tray { flex: 1; display: flex; align-items: center; }
  .t1 { margin-left: 7px; }
  .t2 { margin-left: 13px; }
  .t3 { margin-left: 8px; }
  .t4 { margin-left: 11px; }
  .eng { margin-left: 12px; font-size: 14.500px; letter-spacing: -.2px; }
  .clock { width: 78px; margin-left: 15px; display: flex; flex-direction: column; align-items: center; font-size: 14.500px; line-height: 21px; letter-spacing: -.1px; }
  .note { margin-left: 22px; margin-top: 8px; }
  .edge { width: 1px; height: 60px; background: rgba(255, 255, 255, .5); margin-left: auto; margin-right: 5px; }
</style>
